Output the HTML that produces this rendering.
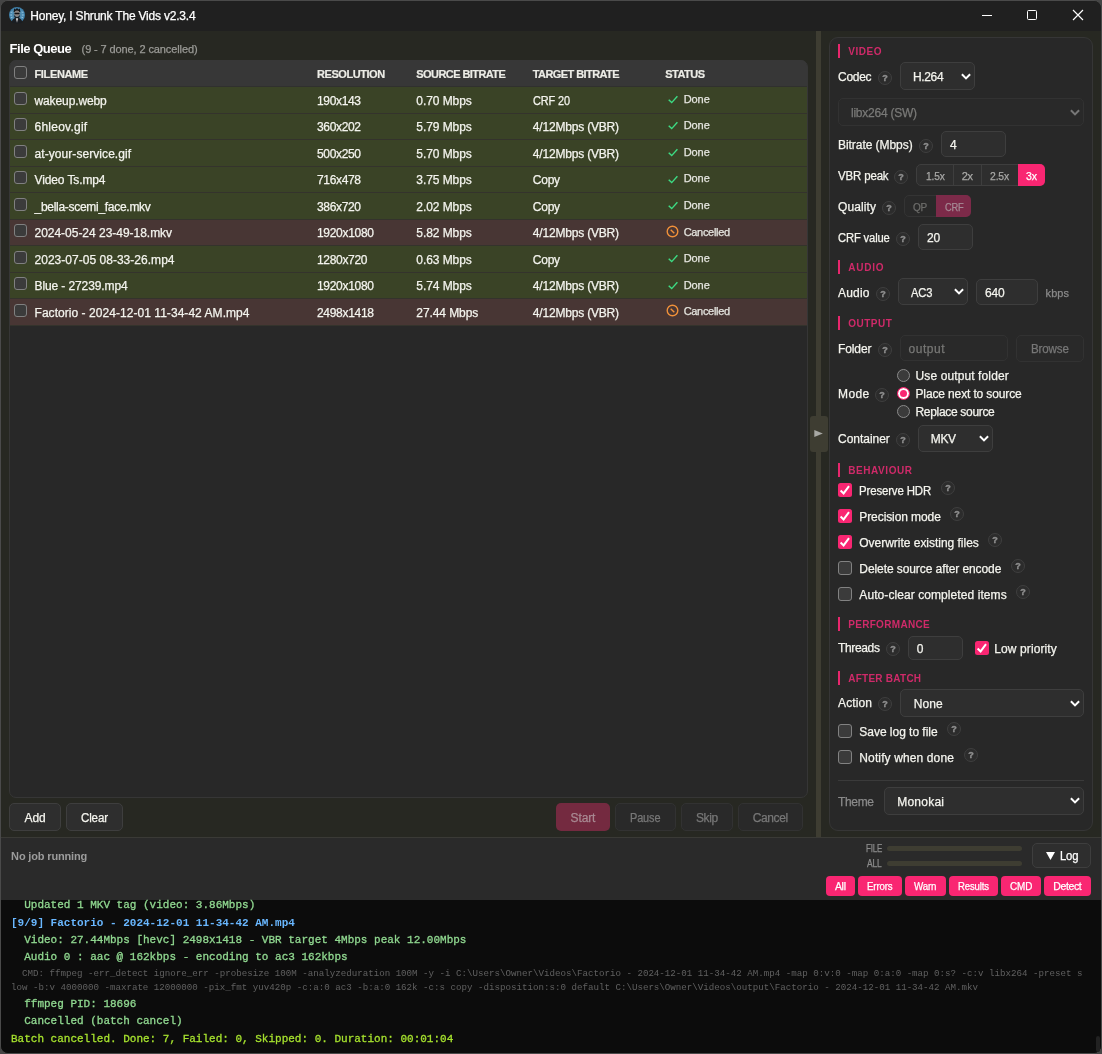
<!DOCTYPE html>
<html lang="en"><head><meta charset="utf-8"><title>Honey, I Shrunk The Vids v2.3.4</title>
<style>
html,body{margin:0;padding:0;}
body{width:1102px;height:1054px;overflow:hidden;background:#454545;font-family:'Liberation Sans', sans-serif;position:relative;}
#app{position:absolute;left:0;top:0;width:1102px;height:1054px;will-change:transform;}
.a{position:absolute;box-sizing:border-box;}
.t{position:absolute;white-space:pre;line-height:16px;font-size:12px;-webkit-text-stroke:0.25px currentColor;}
svg{position:absolute;overflow:visible;}
</style></head>
<body>
<div id="app">
<div class="a" style="left:0px;top:0px;width:1102px;height:1054px;background:#272822;border:1px solid #4a4a4a;border-radius:8px;"></div>
<div class="a" style="left:1px;top:1px;width:1100px;height:30px;background:#202020;border-radius:7px 7px 0 0;"></div>
<svg style="left:9px;top:7px" width="16" height="16" viewBox="0 0 16 16">
<defs><radialGradient id="ig" cx="50%" cy="50%" r="52%"><stop offset="0" stop-color="#4d7288"/><stop offset="0.6" stop-color="#4f8fb6"/><stop offset="1" stop-color="#3a7aa4"/></radialGradient></defs>
<circle cx="8" cy="8" r="8" fill="url(#ig)"/>
<path d="M1.6 5.4 L3.4 5 M1.2 8 L3 8 M1.8 10.8 L3.4 10.4 M14.4 5.4 L12.6 5 M14.8 8 L13 8 M14.2 10.8 L12.6 10.4" stroke="#b9ddf0" stroke-width="0.7" fill="none"/>
<path d="M4.6 5 L5.2 1.6 L6.8 2.6 L8 0.8 L9.2 2.6 L10.8 1.6 L11.4 5 Z" fill="#14161a"/>
<ellipse cx="8" cy="6.6" rx="2.7" ry="3.1" fill="#8a827e"/>
<rect x="5.5" y="5.7" width="5" height="1.5" rx="0.4" fill="#101216"/>
<path d="M5.3 8 Q8 12.4 10.7 8 L10.6 10.2 Q8 12.4 5.4 10.2 Z" fill="#15161a"/>
<path d="M2.6 15.4 Q3.2 10.8 8 10.4 Q12.8 10.8 13.4 15.4 Q8 17.4 2.6 15.4 Z" fill="#1a1d22"/>
<path d="M6.8 11.2 L8 15.8 L9.2 11.2 Z" fill="#d0d0d0"/>
</svg>
<span class="t" style="top:8px;font-size:12px;color:#ffffff;left:30.30px;letter-spacing:-0.205px;">Honey, I Shrunk The Vids v2.3.4</span>
<div class="a" style="left:982px;top:15px;width:10px;height:1px;background:#ffffff;"></div>
<div class="a" style="left:1027px;top:10px;width:10px;height:10px;border:1px solid #ffffff;border-radius:1.5px;"></div>
<svg style="left:1073px;top:10px" width="10" height="10" viewBox="0 0 10 10"><path d="M0 0 L10 10 M10 0 L0 10" stroke="#ffffff" stroke-width="1.15" fill="none"/></svg>
<span class="t" style="top:41px;font-size:13px;color:#ffffff;left:9.50px;font-weight:700;-webkit-text-stroke:0;letter-spacing:-0.463px;">File Queue</span>
<span class="t" style="top:41px;font-size:11px;color:#9a9a96;left:81.60px;letter-spacing:-0.110px;">(9 - 7 done, 2 cancelled)</span>
<div class="a" style="left:9px;top:60px;width:799px;height:738px;background:#282828;border:1px solid #363636;border-radius:7px;"></div>
<div class="a" style="left:10px;top:60px;width:797px;height:26px;background:#373737;border-radius:6px 6px 0 0;"></div>
<div class="a" style="left:10px;top:86px;width:797px;height:1px;background:#30302e;"></div>
<div class="a" style="left:14px;top:66px;width:13px;height:13px;background:#3b3b3b;border:1px solid #808080;border-radius:3px;"></div>
<span class="t" style="top:66px;font-size:11px;color:#ecece6;left:34.50px;font-weight:700;letter-spacing:-0.362px;-webkit-text-stroke:0.2px currentColor;">FILENAME</span>
<span class="t" style="top:66px;font-size:11px;color:#ecece6;left:317.00px;font-weight:700;letter-spacing:-0.436px;-webkit-text-stroke:0.2px currentColor;">RESOLUTION</span>
<span class="t" style="top:66px;font-size:11px;color:#ecece6;left:416.30px;font-weight:700;letter-spacing:-0.575px;-webkit-text-stroke:0.2px currentColor;">SOURCE BITRATE</span>
<span class="t" style="top:66px;font-size:11px;color:#ecece6;left:532.80px;font-weight:700;letter-spacing:-0.578px;-webkit-text-stroke:0.2px currentColor;">TARGET BITRATE</span>
<span class="t" style="top:66px;font-size:11px;color:#ecece6;left:665.20px;font-weight:700;letter-spacing:-0.515px;-webkit-text-stroke:0.2px currentColor;">STATUS</span>
<div class="a" style="left:10px;top:87px;width:797px;height:26px;background:#3a4326;"></div>
<div class="a" style="left:10px;top:113px;width:797px;height:1px;background:#34332c;"></div>
<div class="a" style="left:14px;top:92px;width:13px;height:13px;background:#3b3b3b;border:1px solid #808080;border-radius:3px;"></div>
<span class="t" style="top:93px;font-size:12px;color:#f4f4ee;left:34.50px;letter-spacing:-0.109px;">wakeup.webp</span>
<span class="t" style="top:93px;font-size:12px;color:#f4f4ee;left:317.00px;letter-spacing:-0.341px;">190x143</span>
<span class="t" style="top:93px;font-size:12px;color:#f4f4ee;left:416.30px;letter-spacing:-0.068px;">0.70 Mbps</span>
<span class="t" style="top:93px;font-size:12px;color:#f4f4ee;left:532.80px;letter-spacing:-0.150px;transform:scaleX(0.9115);transform-origin:0 50%;">CRF 20</span>
<svg style="left:668px;top:93.9px" width="10" height="10" viewBox="0 0 10 10"><path d="M0.7 5.7 L3.7 8.6 L9.4 2.2" stroke="#3ddc84" stroke-width="1.4" fill="none"/></svg>
<span class="t" style="top:91px;font-size:11px;color:#e6e6e0;left:683.70px;letter-spacing:-0.066px;">Done</span>
<div class="a" style="left:10px;top:114px;width:797px;height:25px;background:#3a4326;"></div>
<div class="a" style="left:10px;top:139px;width:797px;height:1px;background:#34332c;"></div>
<div class="a" style="left:14px;top:118px;width:13px;height:13px;background:#3b3b3b;border:1px solid #808080;border-radius:3px;"></div>
<span class="t" style="top:119px;font-size:12px;color:#f4f4ee;left:34.50px;letter-spacing:0.246px;">6hleov.gif</span>
<span class="t" style="top:119px;font-size:12px;color:#f4f4ee;left:317.00px;letter-spacing:-0.341px;">360x202</span>
<span class="t" style="top:119px;font-size:12px;color:#f4f4ee;left:416.30px;letter-spacing:-0.068px;">5.79 Mbps</span>
<span class="t" style="top:119px;font-size:12px;color:#f4f4ee;left:532.80px;letter-spacing:-0.185px;">4/12Mbps (VBR)</span>
<svg style="left:668px;top:120.4px" width="10" height="10" viewBox="0 0 10 10"><path d="M0.7 5.7 L3.7 8.6 L9.4 2.2" stroke="#3ddc84" stroke-width="1.4" fill="none"/></svg>
<span class="t" style="top:117px;font-size:11px;color:#e6e6e0;left:683.70px;letter-spacing:-0.066px;">Done</span>
<div class="a" style="left:10px;top:140px;width:797px;height:26px;background:#3a4326;"></div>
<div class="a" style="left:10px;top:166px;width:797px;height:1px;background:#34332c;"></div>
<div class="a" style="left:14px;top:145px;width:13px;height:13px;background:#3b3b3b;border:1px solid #808080;border-radius:3px;"></div>
<span class="t" style="top:146px;font-size:12px;color:#f4f4ee;left:34.50px;letter-spacing:0.068px;">at-your-service.gif</span>
<span class="t" style="top:146px;font-size:12px;color:#f4f4ee;left:317.00px;letter-spacing:-0.341px;">500x250</span>
<span class="t" style="top:146px;font-size:12px;color:#f4f4ee;left:416.30px;letter-spacing:-0.068px;">5.70 Mbps</span>
<span class="t" style="top:146px;font-size:12px;color:#f4f4ee;left:532.80px;letter-spacing:-0.185px;">4/12Mbps (VBR)</span>
<svg style="left:668px;top:146.9px" width="10" height="10" viewBox="0 0 10 10"><path d="M0.7 5.7 L3.7 8.6 L9.4 2.2" stroke="#3ddc84" stroke-width="1.4" fill="none"/></svg>
<span class="t" style="top:144px;font-size:11px;color:#e6e6e0;left:683.70px;letter-spacing:-0.066px;">Done</span>
<div class="a" style="left:10px;top:167px;width:797px;height:25px;background:#3a4326;"></div>
<div class="a" style="left:10px;top:192px;width:797px;height:1px;background:#34332c;"></div>
<div class="a" style="left:14px;top:171px;width:13px;height:13px;background:#3b3b3b;border:1px solid #808080;border-radius:3px;"></div>
<span class="t" style="top:172px;font-size:12px;color:#f4f4ee;left:34.50px;letter-spacing:-0.116px;">Video Ts.mp4</span>
<span class="t" style="top:172px;font-size:12px;color:#f4f4ee;left:317.00px;letter-spacing:-0.341px;">716x478</span>
<span class="t" style="top:172px;font-size:12px;color:#f4f4ee;left:416.30px;letter-spacing:-0.068px;">3.75 Mbps</span>
<span class="t" style="top:172px;font-size:12px;color:#f4f4ee;left:532.80px;letter-spacing:-0.239px;">Copy</span>
<svg style="left:668px;top:173.5px" width="10" height="10" viewBox="0 0 10 10"><path d="M0.7 5.7 L3.7 8.6 L9.4 2.2" stroke="#3ddc84" stroke-width="1.4" fill="none"/></svg>
<span class="t" style="top:170px;font-size:11px;color:#e6e6e0;left:683.70px;letter-spacing:-0.066px;">Done</span>
<div class="a" style="left:10px;top:193px;width:797px;height:26px;background:#3a4326;"></div>
<div class="a" style="left:10px;top:219px;width:797px;height:1px;background:#34332c;"></div>
<div class="a" style="left:14px;top:198px;width:13px;height:13px;background:#3b3b3b;border:1px solid #808080;border-radius:3px;"></div>
<span class="t" style="top:199px;font-size:12px;color:#f4f4ee;left:34.50px;letter-spacing:-0.287px;">_bella-scemi_face.mkv</span>
<span class="t" style="top:199px;font-size:12px;color:#f4f4ee;left:317.00px;letter-spacing:-0.341px;">386x720</span>
<span class="t" style="top:199px;font-size:12px;color:#f4f4ee;left:416.30px;letter-spacing:-0.068px;">2.02 Mbps</span>
<span class="t" style="top:199px;font-size:12px;color:#f4f4ee;left:532.80px;letter-spacing:-0.239px;">Copy</span>
<svg style="left:668px;top:200.0px" width="10" height="10" viewBox="0 0 10 10"><path d="M0.7 5.7 L3.7 8.6 L9.4 2.2" stroke="#3ddc84" stroke-width="1.4" fill="none"/></svg>
<span class="t" style="top:197px;font-size:11px;color:#e6e6e0;left:683.70px;letter-spacing:-0.066px;">Done</span>
<div class="a" style="left:10px;top:220px;width:797px;height:25px;background:#483634;"></div>
<div class="a" style="left:10px;top:245px;width:797px;height:1px;background:#34332c;"></div>
<div class="a" style="left:14px;top:224px;width:13px;height:13px;background:#3b3b3b;border:1px solid #808080;border-radius:3px;"></div>
<span class="t" style="top:225px;font-size:12px;color:#f4f4ee;left:34.50px;letter-spacing:-0.022px;">2024-05-24 23-49-18.mkv</span>
<span class="t" style="top:225px;font-size:12px;color:#f4f4ee;left:317.00px;letter-spacing:-0.299px;">1920x1080</span>
<span class="t" style="top:225px;font-size:12px;color:#f4f4ee;left:416.30px;letter-spacing:-0.068px;">5.82 Mbps</span>
<span class="t" style="top:225px;font-size:12px;color:#f4f4ee;left:532.80px;letter-spacing:-0.185px;">4/12Mbps (VBR)</span>
<svg style="left:666.3px;top:224.5px" width="13" height="13" viewBox="0 0 13 13"><circle cx="6.5" cy="6.5" r="5.3" stroke="#f0913a" stroke-width="1.4" fill="none"/><path d="M4.7 4.7 L8.3 8.3" stroke="#f0913a" stroke-width="1.4" fill="none"/></svg>
<span class="t" style="top:224px;font-size:11px;color:#e6e6e0;left:683.70px;letter-spacing:-0.315px;">Cancelled</span>
<div class="a" style="left:10px;top:246px;width:797px;height:26px;background:#3a4326;"></div>
<div class="a" style="left:10px;top:272px;width:797px;height:1px;background:#34332c;"></div>
<div class="a" style="left:14px;top:251px;width:13px;height:13px;background:#3b3b3b;border:1px solid #808080;border-radius:3px;"></div>
<span class="t" style="top:252px;font-size:12px;color:#f4f4ee;left:34.50px;letter-spacing:0.026px;">2023-07-05 08-33-26.mp4</span>
<span class="t" style="top:252px;font-size:12px;color:#f4f4ee;left:317.00px;letter-spacing:-0.317px;">1280x720</span>
<span class="t" style="top:252px;font-size:12px;color:#f4f4ee;left:416.30px;letter-spacing:-0.068px;">0.63 Mbps</span>
<span class="t" style="top:252px;font-size:12px;color:#f4f4ee;left:532.80px;letter-spacing:-0.239px;">Copy</span>
<svg style="left:668px;top:253.0px" width="10" height="10" viewBox="0 0 10 10"><path d="M0.7 5.7 L3.7 8.6 L9.4 2.2" stroke="#3ddc84" stroke-width="1.4" fill="none"/></svg>
<span class="t" style="top:250px;font-size:11px;color:#e6e6e0;left:683.70px;letter-spacing:-0.066px;">Done</span>
<div class="a" style="left:10px;top:273px;width:797px;height:25px;background:#3a4326;"></div>
<div class="a" style="left:10px;top:298px;width:797px;height:1px;background:#34332c;"></div>
<div class="a" style="left:14px;top:277px;width:13px;height:13px;background:#3b3b3b;border:1px solid #808080;border-radius:3px;"></div>
<span class="t" style="top:278px;font-size:12px;color:#f4f4ee;left:34.50px;letter-spacing:-0.102px;">Blue - 27239.mp4</span>
<span class="t" style="top:278px;font-size:12px;color:#f4f4ee;left:317.00px;letter-spacing:-0.299px;">1920x1080</span>
<span class="t" style="top:278px;font-size:12px;color:#f4f4ee;left:416.30px;letter-spacing:-0.068px;">5.74 Mbps</span>
<span class="t" style="top:278px;font-size:12px;color:#f4f4ee;left:532.80px;letter-spacing:-0.185px;">4/12Mbps (VBR)</span>
<svg style="left:668px;top:279.5px" width="10" height="10" viewBox="0 0 10 10"><path d="M0.7 5.7 L3.7 8.6 L9.4 2.2" stroke="#3ddc84" stroke-width="1.4" fill="none"/></svg>
<span class="t" style="top:277px;font-size:11px;color:#e6e6e0;left:683.70px;letter-spacing:-0.066px;">Done</span>
<div class="a" style="left:10px;top:299px;width:797px;height:26px;background:#483634;"></div>
<div class="a" style="left:10px;top:325px;width:797px;height:1px;background:#34332c;"></div>
<div class="a" style="left:14px;top:304px;width:13px;height:13px;background:#3b3b3b;border:1px solid #808080;border-radius:3px;"></div>
<span class="t" style="top:305px;font-size:12px;color:#f4f4ee;left:34.50px;letter-spacing:0.049px;">Factorio - 2024-12-01 11-34-42 AM.mp4</span>
<span class="t" style="top:305px;font-size:12px;color:#f4f4ee;left:317.00px;letter-spacing:-0.299px;">2498x1418</span>
<span class="t" style="top:305px;font-size:12px;color:#f4f4ee;left:416.30px;letter-spacing:-0.080px;">27.44 Mbps</span>
<span class="t" style="top:305px;font-size:12px;color:#f4f4ee;left:532.80px;letter-spacing:-0.185px;">4/12Mbps (VBR)</span>
<svg style="left:666.3px;top:304.1px" width="13" height="13" viewBox="0 0 13 13"><circle cx="6.5" cy="6.5" r="5.3" stroke="#f0913a" stroke-width="1.4" fill="none"/><path d="M4.7 4.7 L8.3 8.3" stroke="#f0913a" stroke-width="1.4" fill="none"/></svg>
<span class="t" style="top:303px;font-size:11px;color:#e6e6e0;left:683.70px;letter-spacing:-0.315px;">Cancelled</span>
<div class="a" style="left:9px;top:803px;width:52px;height:28px;background:#2e2e2e;border:1px solid #3e3e3e;border-radius:5px;"></div>
<span class="t" style="top:810px;font-size:12px;color:#f4f4ee;left:24.55px;letter-spacing:-0.080px;">Add</span>
<div class="a" style="left:66px;top:803px;width:57px;height:28px;background:#2e2e2e;border:1px solid #3e3e3e;border-radius:5px;"></div>
<span class="t" style="top:810px;font-size:12px;color:#f4f4ee;left:81.00px;letter-spacing:-0.150px;transform:scaleX(0.9613);transform-origin:0 50%;">Clear</span>
<div class="a" style="left:556px;top:803px;width:54px;height:28px;background:#742a40;border-radius:5px;"></div>
<span class="t" style="top:810px;font-size:12px;color:#a98a93;left:570.60px;letter-spacing:-0.136px;">Start</span>
<div class="a" style="left:615px;top:803px;width:61px;height:28px;background:#292929;border:1px solid #323232;border-radius:5px;"></div>
<span class="t" style="top:810px;font-size:12px;color:#777777;left:630.40px;letter-spacing:-0.150px;transform:scaleX(0.9123);transform-origin:0 50%;">Pause</span>
<div class="a" style="left:681px;top:803px;width:52px;height:28px;background:#292929;border:1px solid #323232;border-radius:5px;"></div>
<span class="t" style="top:810px;font-size:12px;color:#777777;left:695.90px;letter-spacing:-0.348px;">Skip</span>
<div class="a" style="left:738px;top:803px;width:65px;height:28px;background:#292929;border:1px solid #323232;border-radius:5px;"></div>
<span class="t" style="top:810px;font-size:12px;color:#777777;left:752.70px;letter-spacing:-0.372px;">Cancel</span>
<div class="a" style="left:816px;top:31px;width:5px;height:806px;background:#3e3d32;"></div>
<div class="a" style="left:810px;top:416px;width:18px;height:36px;background:#3e3d32;border-radius:3px;"></div>
<svg style="left:814px;top:430px" width="9" height="7" viewBox="0 0 9 7"><path d="M0.3 0 L8.8 3.5 L0.3 7 Z" fill="#a8a8a4"/></svg>
<div class="a" style="left:829px;top:37px;width:264px;height:794px;background:#282828;border:1px solid #363636;border-radius:9px;"></div>
<div class="a" style="left:838px;top:44px;width:2px;height:14px;background:#e8266d;"></div>
<span class="t" style="top:44px;font-size:10px;color:#cf2a69;left:848.20px;font-weight:700;letter-spacing:0.569px;-webkit-text-stroke:0;">VIDEO</span>
<span class="t" style="top:69px;font-size:12px;color:#f4f4ee;left:838.00px;letter-spacing:-0.272px;">Codec</span>
<div class="a" style="left:878px;top:71px;width:14px;height:14px;background:#2c2c2c;border:1px solid #3f3f3f;border-radius:50%;"></div>
<span class="t" style="top:70px;font-size:9px;color:#8e8e8e;left:735.00px;width:300px;text-align:center;font-weight:700;-webkit-text-stroke:0.4px currentColor;">?</span>
<div class="a" style="left:900px;top:62px;width:75px;height:28px;background:#2e2e2e;border:1px solid #3e3e3e;border-radius:5px;"></div>
<span class="t" style="top:69px;font-size:12px;color:#f4f4ee;left:913.00px;letter-spacing:-0.358px;">H.264</span>
<svg style="left:961px;top:72.5px" width="10" height="7" viewBox="0 0 10 7"><path d="M0.9 1.3 L5 5.4 L9.1 1.3" stroke="#ffffff" stroke-width="2" fill="none"/></svg>
<div class="a" style="left:838px;top:98px;width:246px;height:28px;background:#292929;border:1px solid #323232;border-radius:5px;"></div>
<span class="t" style="top:105px;font-size:12px;color:#7a7a78;left:851.00px;letter-spacing:-0.244px;">libx264 (SW)</span>
<svg style="left:1070px;top:108.5px" width="10" height="7" viewBox="0 0 10 7"><path d="M0.9 1.3 L5 5.4 L9.1 1.3" stroke="#777777" stroke-width="2" fill="none"/></svg>
<span class="t" style="top:137px;font-size:12px;color:#f4f4ee;left:838.00px;letter-spacing:-0.051px;">Bitrate (Mbps)</span>
<div class="a" style="left:919px;top:139px;width:14px;height:14px;background:#2c2c2c;border:1px solid #3f3f3f;border-radius:50%;"></div>
<span class="t" style="top:138px;font-size:9px;color:#8e8e8e;left:776.00px;width:300px;text-align:center;font-weight:700;-webkit-text-stroke:0.4px currentColor;">?</span>
<div class="a" style="left:941px;top:131px;width:65px;height:26px;background:#2e2e2e;border:1px solid #3e3e3e;border-radius:5px;"></div>
<span class="t" style="top:137px;font-size:12px;color:#f4f4ee;left:950.00px;letter-spacing:-0.088px;">4</span>
<span class="t" style="top:168px;font-size:12px;color:#f4f4ee;left:838.00px;letter-spacing:-0.150px;transform:scaleX(0.9551);transform-origin:0 50%;">VBR peak</span>
<div class="a" style="left:894px;top:170px;width:14px;height:14px;background:#2c2c2c;border:1px solid #3f3f3f;border-radius:50%;"></div>
<span class="t" style="top:169px;font-size:9px;color:#8e8e8e;left:751.00px;width:300px;text-align:center;font-weight:700;-webkit-text-stroke:0.4px currentColor;">?</span>
<div class="a" style="left:916px;top:164px;width:129px;height:22px;background:#2e2e2e;border:1px solid #3e3e3e;border-radius:5px;"></div>
<div class="a" style="left:953px;top:165px;width:1px;height:20px;background:#3e3e3e;"></div>
<div class="a" style="left:981px;top:165px;width:1px;height:20px;background:#3e3e3e;"></div>
<div class="a" style="left:1018px;top:164px;width:27px;height:22px;background:#f92672;border-radius:0 5px 5px 0;"></div>
<span class="t" style="top:168px;font-size:11px;color:#a8a8a6;left:926.10px;letter-spacing:-0.150px;transform:scaleX(0.9289);transform-origin:0 50%;">1.5x</span>
<span class="t" style="top:168px;font-size:11px;color:#a8a8a6;left:961.70px;letter-spacing:-0.325px;">2x</span>
<span class="t" style="top:168px;font-size:11px;color:#a8a8a6;left:989.70px;letter-spacing:-0.150px;transform:scaleX(0.9436);transform-origin:0 50%;">2.5x</span>
<span class="t" style="top:168px;font-size:11px;color:#ffffff;left:1025.90px;letter-spacing:-0.150px;transform:scaleX(0.9586);transform-origin:0 50%;">3x</span>
<span class="t" style="top:199px;font-size:12px;color:#f4f4ee;left:838.00px;letter-spacing:0.090px;">Quality</span>
<div class="a" style="left:882px;top:201px;width:14px;height:14px;background:#2c2c2c;border:1px solid #3f3f3f;border-radius:50%;"></div>
<span class="t" style="top:200px;font-size:9px;color:#8e8e8e;left:739.00px;width:300px;text-align:center;font-weight:700;-webkit-text-stroke:0.4px currentColor;">?</span>
<div class="a" style="left:904px;top:195px;width:67px;height:22px;background:#292929;border:1px solid #343434;border-radius:5px;"></div>
<div class="a" style="left:936px;top:195px;width:35px;height:22px;background:#7c2a49;border-radius:0 5px 5px 0;"></div>
<span class="t" style="top:200px;font-size:10px;color:#6c6c6a;left:913.10px;letter-spacing:-0.253px;">QP</span>
<span class="t" style="top:200px;font-size:10px;color:#a58a95;left:944.60px;letter-spacing:-0.150px;transform:scaleX(0.9278);transform-origin:0 50%;">CRF</span>
<span class="t" style="top:230px;font-size:12px;color:#f4f4ee;left:838.00px;letter-spacing:-0.150px;transform:scaleX(0.9335);transform-origin:0 50%;">CRF value</span>
<div class="a" style="left:896px;top:232px;width:14px;height:14px;background:#2c2c2c;border:1px solid #3f3f3f;border-radius:50%;"></div>
<span class="t" style="top:231px;font-size:9px;color:#8e8e8e;left:753.00px;width:300px;text-align:center;font-weight:700;-webkit-text-stroke:0.4px currentColor;">?</span>
<div class="a" style="left:918px;top:224px;width:55px;height:26px;background:#2e2e2e;border:1px solid #3e3e3e;border-radius:5px;"></div>
<span class="t" style="top:230px;font-size:12px;color:#f4f4ee;left:927.00px;letter-spacing:-0.159px;">20</span>
<div class="a" style="left:838px;top:260px;width:2px;height:14px;background:#e8266d;"></div>
<span class="t" style="top:260px;font-size:10px;color:#cf2a69;left:848.20px;font-weight:700;letter-spacing:0.766px;-webkit-text-stroke:0;">AUDIO</span>
<span class="t" style="top:285px;font-size:12px;color:#f4f4ee;left:838.00px;letter-spacing:0.199px;">Audio</span>
<div class="a" style="left:876px;top:287px;width:14px;height:14px;background:#2c2c2c;border:1px solid #3f3f3f;border-radius:50%;"></div>
<span class="t" style="top:286px;font-size:9px;color:#8e8e8e;left:733.00px;width:300px;text-align:center;font-weight:700;-webkit-text-stroke:0.4px currentColor;">?</span>
<div class="a" style="left:898px;top:278px;width:70px;height:27px;background:#2e2e2e;border:1px solid #3e3e3e;border-radius:5px;"></div>
<span class="t" style="top:285px;font-size:12px;color:#f4f4ee;left:911.00px;letter-spacing:-0.150px;transform:scaleX(0.9330);transform-origin:0 50%;">AC3</span>
<svg style="left:954px;top:288.35px" width="10" height="7" viewBox="0 0 10 7"><path d="M0.9 1.3 L5 5.4 L9.1 1.3" stroke="#ffffff" stroke-width="2" fill="none"/></svg>
<div class="a" style="left:976px;top:279px;width:62px;height:26px;background:#2e2e2e;border:1px solid #3e3e3e;border-radius:5px;"></div>
<span class="t" style="top:285px;font-size:12px;color:#f4f4ee;left:985.00px;letter-spacing:-0.116px;">640</span>
<span class="t" style="top:285px;font-size:11px;color:#8a8a8a;left:1045.60px;letter-spacing:0.050px;">kbps</span>
<div class="a" style="left:838px;top:316px;width:2px;height:14px;background:#e8266d;"></div>
<span class="t" style="top:316px;font-size:10px;color:#cf2a69;left:848.20px;font-weight:700;letter-spacing:0.518px;-webkit-text-stroke:0;">OUTPUT</span>
<span class="t" style="top:341px;font-size:12px;color:#f4f4ee;left:838.00px;letter-spacing:-0.103px;">Folder</span>
<div class="a" style="left:878px;top:343px;width:14px;height:14px;background:#2c2c2c;border:1px solid #3f3f3f;border-radius:50%;"></div>
<span class="t" style="top:342px;font-size:9px;color:#8e8e8e;left:735.00px;width:300px;text-align:center;font-weight:700;-webkit-text-stroke:0.4px currentColor;">?</span>
<div class="a" style="left:900px;top:335px;width:108px;height:26px;background:#292929;border:1px solid #323232;border-radius:5px;"></div>
<span class="t" style="top:341px;font-size:12px;color:#777775;left:908.60px;letter-spacing:0.525px;">output</span>
<div class="a" style="left:1016px;top:335px;width:68px;height:27px;background:#292929;border:1px solid #323232;border-radius:5px;"></div>
<span class="t" style="top:341px;font-size:12px;color:#777777;left:1031.10px;letter-spacing:-0.150px;transform:scaleX(0.9652);transform-origin:0 50%;">Browse</span>
<span class="t" style="top:386px;font-size:12px;color:#f4f4ee;left:838.00px;letter-spacing:0.423px;">Mode</span>
<div class="a" style="left:875px;top:388px;width:14px;height:14px;background:#2c2c2c;border:1px solid #3f3f3f;border-radius:50%;"></div>
<span class="t" style="top:387px;font-size:9px;color:#8e8e8e;left:732.00px;width:300px;text-align:center;font-weight:700;-webkit-text-stroke:0.4px currentColor;">?</span>
<div class="a" style="left:897px;top:369px;width:13px;height:13px;background:#3b3b3b;border:1px solid #8a8a8a;border-radius:50%;"></div>
<span class="t" style="top:368px;font-size:12px;color:#f4f4ee;left:915.50px;letter-spacing:0.113px;">Use output folder</span>
<div class="a" style="left:897px;top:387px;width:13px;height:13px;background:#f92672;border:1px solid #f92672;border-radius:50%;box-shadow:inset 0 0 0 2px #ffffff;"></div>
<span class="t" style="top:386px;font-size:12px;color:#f4f4ee;left:915.50px;letter-spacing:-0.133px;">Place next to source</span>
<div class="a" style="left:897px;top:405px;width:13px;height:13px;background:#3b3b3b;border:1px solid #8a8a8a;border-radius:50%;"></div>
<span class="t" style="top:404px;font-size:12px;color:#f4f4ee;left:915.50px;letter-spacing:-0.315px;">Replace source</span>
<span class="t" style="top:431px;font-size:12px;color:#f4f4ee;left:838.00px;letter-spacing:-0.029px;">Container</span>
<div class="a" style="left:896px;top:433px;width:14px;height:14px;background:#2c2c2c;border:1px solid #3f3f3f;border-radius:50%;"></div>
<span class="t" style="top:432px;font-size:9px;color:#8e8e8e;left:753.00px;width:300px;text-align:center;font-weight:700;-webkit-text-stroke:0.4px currentColor;">?</span>
<div class="a" style="left:918px;top:425px;width:75px;height:27px;background:#2e2e2e;border:1px solid #3e3e3e;border-radius:5px;"></div>
<span class="t" style="top:431px;font-size:12px;color:#f4f4ee;left:930.70px;letter-spacing:-0.308px;">MKV</span>
<svg style="left:979px;top:435.4px" width="10" height="7" viewBox="0 0 10 7"><path d="M0.9 1.3 L5 5.4 L9.1 1.3" stroke="#ffffff" stroke-width="2" fill="none"/></svg>
<div class="a" style="left:838px;top:463px;width:2px;height:14px;background:#e8266d;"></div>
<span class="t" style="top:463px;font-size:10px;color:#cf2a69;left:848.20px;font-weight:700;letter-spacing:0.567px;-webkit-text-stroke:0;">BEHAVIOUR</span>
<div class="a" style="left:838px;top:483px;width:14px;height:14px;background:#f92672;border-radius:2.5px;"></div>
<svg style="left:838px;top:483px" width="14" height="14" viewBox="0 0 14 14"><path d="M2.6 7.6 L5.6 10.4 L11 3.2" stroke="#ffffff" stroke-width="2" fill="none"/></svg>
<span class="t" style="top:483px;font-size:12px;color:#f4f4ee;left:859.30px;letter-spacing:-0.150px;transform:scaleX(0.9536);transform-origin:0 50%;">Preserve HDR</span>
<div class="a" style="left:941px;top:481px;width:14px;height:14px;background:#2c2c2c;border:1px solid #3f3f3f;border-radius:50%;"></div>
<span class="t" style="top:480px;font-size:9px;color:#8e8e8e;left:798.00px;width:300px;text-align:center;font-weight:700;-webkit-text-stroke:0.4px currentColor;">?</span>
<div class="a" style="left:838px;top:509px;width:14px;height:14px;background:#f92672;border-radius:2.5px;"></div>
<svg style="left:838px;top:509px" width="14" height="14" viewBox="0 0 14 14"><path d="M2.6 7.6 L5.6 10.4 L11 3.2" stroke="#ffffff" stroke-width="2" fill="none"/></svg>
<span class="t" style="top:509px;font-size:12px;color:#f4f4ee;left:859.30px;letter-spacing:-0.086px;">Precision mode</span>
<div class="a" style="left:950px;top:507px;width:14px;height:14px;background:#2c2c2c;border:1px solid #3f3f3f;border-radius:50%;"></div>
<span class="t" style="top:506px;font-size:9px;color:#8e8e8e;left:807.00px;width:300px;text-align:center;font-weight:700;-webkit-text-stroke:0.4px currentColor;">?</span>
<div class="a" style="left:838px;top:535px;width:14px;height:14px;background:#f92672;border-radius:2.5px;"></div>
<svg style="left:838px;top:535px" width="14" height="14" viewBox="0 0 14 14"><path d="M2.6 7.6 L5.6 10.4 L11 3.2" stroke="#ffffff" stroke-width="2" fill="none"/></svg>
<span class="t" style="top:535px;font-size:12px;color:#f4f4ee;left:859.30px;letter-spacing:-0.024px;">Overwrite existing files</span>
<div class="a" style="left:988px;top:533px;width:14px;height:14px;background:#2c2c2c;border:1px solid #3f3f3f;border-radius:50%;"></div>
<span class="t" style="top:532px;font-size:9px;color:#8e8e8e;left:845.00px;width:300px;text-align:center;font-weight:700;-webkit-text-stroke:0.4px currentColor;">?</span>
<div class="a" style="left:838px;top:561px;width:14px;height:14px;background:#3b3b3b;border:1px solid #828282;border-radius:3px;"></div>
<span class="t" style="top:561px;font-size:12px;color:#f4f4ee;left:859.30px;letter-spacing:-0.080px;">Delete source after encode</span>
<div class="a" style="left:1011px;top:559px;width:14px;height:14px;background:#2c2c2c;border:1px solid #3f3f3f;border-radius:50%;"></div>
<span class="t" style="top:558px;font-size:9px;color:#8e8e8e;left:868.00px;width:300px;text-align:center;font-weight:700;-webkit-text-stroke:0.4px currentColor;">?</span>
<div class="a" style="left:838px;top:587px;width:14px;height:14px;background:#3b3b3b;border:1px solid #828282;border-radius:3px;"></div>
<span class="t" style="top:587px;font-size:12px;color:#f4f4ee;left:859.30px;letter-spacing:0.080px;">Auto-clear completed items</span>
<div class="a" style="left:1016px;top:585px;width:14px;height:14px;background:#2c2c2c;border:1px solid #3f3f3f;border-radius:50%;"></div>
<span class="t" style="top:584px;font-size:9px;color:#8e8e8e;left:873.00px;width:300px;text-align:center;font-weight:700;-webkit-text-stroke:0.4px currentColor;">?</span>
<div class="a" style="left:838px;top:617px;width:2px;height:14px;background:#e8266d;"></div>
<span class="t" style="top:617px;font-size:10px;color:#cf2a69;left:848.20px;font-weight:700;letter-spacing:0.316px;-webkit-text-stroke:0;">PERFORMANCE</span>
<span class="t" style="top:640px;font-size:12px;color:#f4f4ee;left:838.00px;letter-spacing:-0.355px;">Threads</span>
<div class="a" style="left:886px;top:642px;width:14px;height:14px;background:#2c2c2c;border:1px solid #3f3f3f;border-radius:50%;"></div>
<span class="t" style="top:641px;font-size:9px;color:#8e8e8e;left:743.00px;width:300px;text-align:center;font-weight:700;-webkit-text-stroke:0.4px currentColor;">?</span>
<div class="a" style="left:908px;top:636px;width:55px;height:24px;background:#2e2e2e;border:1px solid #3e3e3e;border-radius:5px;"></div>
<span class="t" style="top:641px;font-size:12px;color:#f4f4ee;left:916.80px;letter-spacing:-0.088px;">0</span>
<div class="a" style="left:975px;top:641px;width:14px;height:14px;background:#f92672;border-radius:2.5px;"></div>
<svg style="left:975px;top:641px" width="14" height="14" viewBox="0 0 14 14"><path d="M2.6 7.6 L5.6 10.4 L11 3.2" stroke="#ffffff" stroke-width="2" fill="none"/></svg>
<span class="t" style="top:641px;font-size:12px;color:#f4f4ee;left:994.30px;letter-spacing:0.104px;">Low priority</span>
<div class="a" style="left:838px;top:671px;width:2px;height:14px;background:#e8266d;"></div>
<span class="t" style="top:671px;font-size:10px;color:#cf2a69;left:848.20px;font-weight:700;letter-spacing:0.253px;-webkit-text-stroke:0;">AFTER BATCH</span>
<span class="t" style="top:695px;font-size:12px;color:#f4f4ee;left:838.00px;letter-spacing:0.128px;">Action</span>
<div class="a" style="left:878px;top:697px;width:14px;height:14px;background:#2c2c2c;border:1px solid #3f3f3f;border-radius:50%;"></div>
<span class="t" style="top:696px;font-size:9px;color:#8e8e8e;left:735.00px;width:300px;text-align:center;font-weight:700;-webkit-text-stroke:0.4px currentColor;">?</span>
<div class="a" style="left:900px;top:689px;width:184px;height:28px;background:#2e2e2e;border:1px solid #3e3e3e;border-radius:5px;"></div>
<span class="t" style="top:696px;font-size:12px;color:#f4f4ee;left:913.70px;letter-spacing:0.104px;">None</span>
<svg style="left:1070px;top:699.5px" width="10" height="7" viewBox="0 0 10 7"><path d="M0.9 1.3 L5 5.4 L9.1 1.3" stroke="#ffffff" stroke-width="2" fill="none"/></svg>
<div class="a" style="left:838px;top:724px;width:14px;height:14px;background:#3b3b3b;border:1px solid #828282;border-radius:3px;"></div>
<span class="t" style="top:724px;font-size:12px;color:#f4f4ee;left:859.30px;letter-spacing:-0.028px;">Save log to file</span>
<div class="a" style="left:947px;top:722px;width:14px;height:14px;background:#2c2c2c;border:1px solid #3f3f3f;border-radius:50%;"></div>
<span class="t" style="top:721px;font-size:9px;color:#8e8e8e;left:804.00px;width:300px;text-align:center;font-weight:700;-webkit-text-stroke:0.4px currentColor;">?</span>
<div class="a" style="left:838px;top:750px;width:14px;height:14px;background:#3b3b3b;border:1px solid #828282;border-radius:3px;"></div>
<span class="t" style="top:750px;font-size:12px;color:#f4f4ee;left:859.30px;letter-spacing:0.124px;">Notify when done</span>
<div class="a" style="left:964px;top:748px;width:14px;height:14px;background:#2c2c2c;border:1px solid #3f3f3f;border-radius:50%;"></div>
<span class="t" style="top:747px;font-size:9px;color:#8e8e8e;left:821.00px;width:300px;text-align:center;font-weight:700;-webkit-text-stroke:0.4px currentColor;">?</span>
<div class="a" style="left:838px;top:780px;width:246px;height:1px;background:#3a3a3a;"></div>
<span class="t" style="top:794px;font-size:12px;color:#8a8a8a;left:838.00px;letter-spacing:-0.340px;">Theme</span>
<div class="a" style="left:884px;top:787px;width:200px;height:28px;background:#2e2e2e;border:1px solid #3e3e3e;border-radius:5px;"></div>
<span class="t" style="top:794px;font-size:12px;color:#f4f4ee;left:897.20px;letter-spacing:0.240px;">Monokai</span>
<svg style="left:1070px;top:797.4000000000001px" width="10" height="7" viewBox="0 0 10 7"><path d="M0.9 1.3 L5 5.4 L9.1 1.3" stroke="#ffffff" stroke-width="2" fill="none"/></svg>
<div class="a" style="left:1px;top:837px;width:1100px;height:63px;background:#2a2a2a;"></div>
<div class="a" style="left:1px;top:837px;width:1100px;height:1px;background:#3a3a36;"></div>
<span class="t" style="top:848px;font-size:11px;color:#9c9c9c;left:11.10px;font-weight:700;-webkit-text-stroke:0;letter-spacing:-0.154px;">No job running</span>
<span class="t" style="top:841px;font-size:10px;color:#8c8c8c;left:865.60px;letter-spacing:-0.150px;transform:scaleX(0.7932);transform-origin:0 50%;">FILE</span>
<span class="t" style="top:856px;font-size:10px;color:#8c8c8c;left:867.20px;letter-spacing:-0.150px;transform:scaleX(0.8459);transform-origin:0 50%;">ALL</span>
<div class="a" style="left:887px;top:846px;width:135px;height:5px;background:#3e3d32;border-radius:3px;"></div>
<div class="a" style="left:887px;top:861px;width:135px;height:5px;background:#3e3d32;border-radius:3px;"></div>
<div class="a" style="left:1032px;top:843px;width:59px;height:25px;background:#2e2e2e;border:1px solid #3e3e3e;border-radius:5px;"></div>
<svg style="left:1045.6px;top:852.2px" width="9" height="8" viewBox="0 0 9 8"><path d="M0 0 L9 0 L4.5 8 Z" fill="#ffffff"/></svg>
<span class="t" style="top:848px;font-size:12px;color:#ffffff;left:1060.00px;letter-spacing:-0.150px;transform:scaleX(0.9376);transform-origin:0 50%;">Log</span>
<div class="a" style="left:826px;top:876px;width:29px;height:20px;background:#f92672;border-radius:4px;"></div>
<span class="t" style="top:878px;font-size:10.5px;color:#ffffff;left:834.90px;letter-spacing:-0.286px;">All</span>
<div class="a" style="left:858px;top:876px;width:44px;height:20px;background:#f92672;border-radius:4px;"></div>
<span class="t" style="top:878px;font-size:10.5px;color:#ffffff;left:867.25px;letter-spacing:-0.150px;transform:scaleX(0.9230);transform-origin:0 50%;">Errors</span>
<div class="a" style="left:905px;top:876px;width:41px;height:20px;background:#f92672;border-radius:4px;"></div>
<span class="t" style="top:878px;font-size:10.5px;color:#ffffff;left:914.30px;letter-spacing:-0.150px;transform:scaleX(0.9277);transform-origin:0 50%;">Warn</span>
<div class="a" style="left:949px;top:876px;width:49px;height:20px;background:#f92672;border-radius:4px;"></div>
<span class="t" style="top:878px;font-size:10.5px;color:#ffffff;left:957.95px;letter-spacing:-0.150px;transform:scaleX(0.9087);transform-origin:0 50%;">Results</span>
<div class="a" style="left:1001px;top:876px;width:40px;height:20px;background:#f92672;border-radius:4px;"></div>
<span class="t" style="top:878px;font-size:10.5px;color:#ffffff;left:1009.75px;letter-spacing:-0.150px;transform:scaleX(0.9440);transform-origin:0 50%;">CMD</span>
<div class="a" style="left:1044px;top:876px;width:47px;height:20px;background:#f92672;border-radius:4px;"></div>
<span class="t" style="top:878px;font-size:10.5px;color:#ffffff;left:1053.35px;letter-spacing:-0.392px;">Detect</span>
<div class="a" style="left:1px;top:900px;width:1100px;height:153px;background:#0c0c0c;border-radius:0 0 7px 7px;"></div>
<div class="a" style="left:1096px;top:1036px;width:4px;height:16px;background:#222222;border-radius:2px;"></div>
<span class="t" style="top:897px;font-size:11px;color:#90d890;left:11.00px;font-family:'Liberation Mono', monospace;-webkit-text-stroke:0.3px currentColor;">  Updated 1 MKV tag (video: 3.86Mbps)</span>
<span class="t" style="top:915px;font-size:11px;color:#69b7ff;left:11.00px;font-weight:700;font-family:'Liberation Mono', monospace;-webkit-text-stroke:0;">[9/9] Factorio - 2024-12-01 11-34-42 AM.mp4</span>
<span class="t" style="top:932px;font-size:11px;color:#90d890;left:11.00px;font-family:'Liberation Mono', monospace;-webkit-text-stroke:0.3px currentColor;">  Video: 27.44Mbps [hevc] 2498x1418 - VBR target 4Mbps peak 12.00Mbps</span>
<span class="t" style="top:949px;font-size:11px;color:#90d890;left:11.00px;font-family:'Liberation Mono', monospace;-webkit-text-stroke:0.3px currentColor;">  Audio 0 : aac @ 162kbps - encoding to ac3 162kbps</span>
<span class="t" style="top:966px;font-size:9.1667px;color:#606060;left:11.00px;font-family:'Liberation Mono', monospace;-webkit-text-stroke:0;">  CMD: ffmpeg -err_detect ignore_err -probesize 100M -analyzeduration 100M -y -i C:\Users\Owner\Videos\Factorio - 2024-12-01 11-34-42 AM.mp4 -map 0:v:0 -map 0:a:0 -map 0:s? -c:v libx264 -preset s</span>
<span class="t" style="top:980px;font-size:9.1667px;color:#606060;left:11.00px;font-family:'Liberation Mono', monospace;-webkit-text-stroke:0;">low -b:v 4000000 -maxrate 12000000 -pix_fmt yuv420p -c:a:0 ac3 -b:a:0 162k -c:s copy -disposition:s:0 default C:\Users\Owner\Videos\output\Factorio - 2024-12-01 11-34-42 AM.mkv</span>
<span class="t" style="top:996px;font-size:11px;color:#90d890;left:11.00px;font-family:'Liberation Mono', monospace;-webkit-text-stroke:0.3px currentColor;">  ffmpeg PID: 18696</span>
<span class="t" style="top:1013px;font-size:11px;color:#90d890;left:11.00px;font-family:'Liberation Mono', monospace;-webkit-text-stroke:0.3px currentColor;">  Cancelled (batch cancel)</span>
<span class="t" style="top:1031px;font-size:11px;color:#a6e22e;left:11.00px;font-family:'Liberation Mono', monospace;-webkit-text-stroke:0.3px currentColor;">Batch cancelled. Done: 7, Failed: 0, Skipped: 0. Duration: 00:01:04</span>
</div>

</body></html>
